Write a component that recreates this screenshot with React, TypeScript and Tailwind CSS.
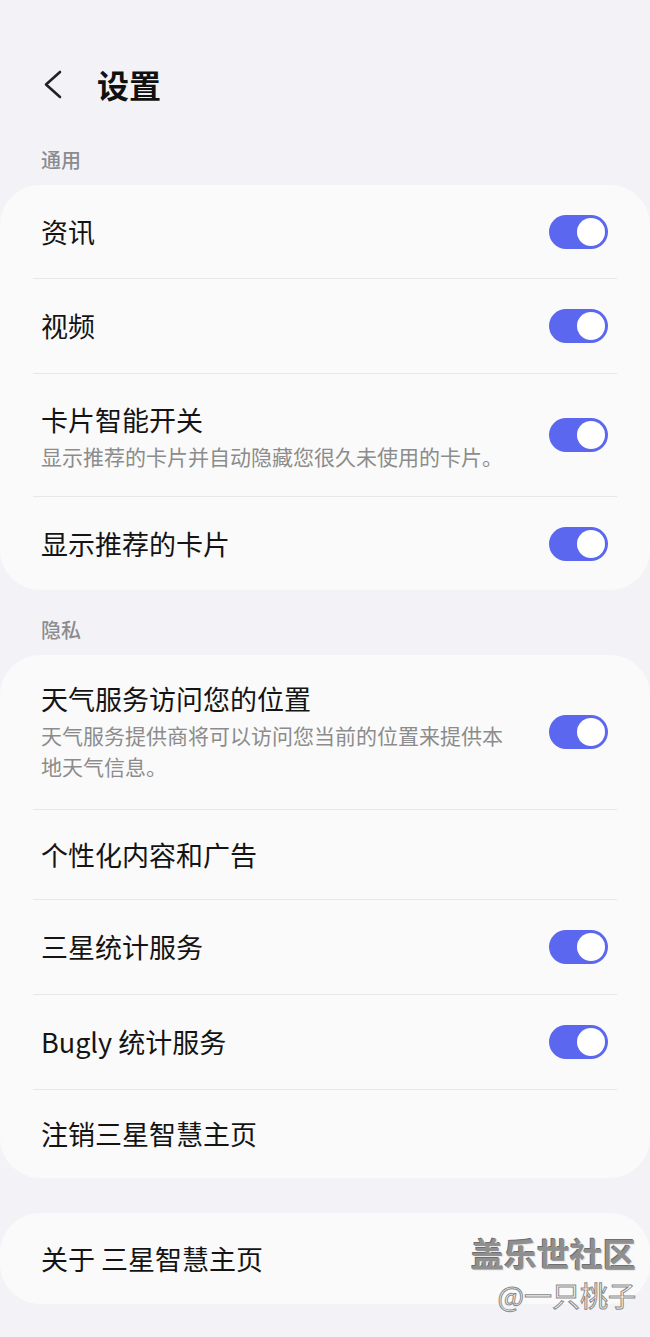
import React from 'react';

interface Row {
    title: string;
    sub?: string;
    toggle?: boolean;
    h: string;
    extra?: string;
}

const general: Row[] = [
    { title: '资讯', toggle: true, h: 'h-[93px]' },
    { title: '视频', toggle: true, h: 'h-[95px]' },
    { title: '卡片智能开关', sub: '显示推荐的卡片并自动隐藏您很久未使用的卡片。', toggle: true, h: 'h-[123px]', extra: 'pt-[4px]' },
    { title: '显示推荐的卡片', toggle: true, h: 'h-[94px]' },
];

const privacy: Row[] = [
    { title: '天气服务访问您的位置', sub: '天气服务提供商将可以访问您当前的位置来提供本地天气信息。', toggle: true, h: 'h-[154px]' },
    { title: '个性化内容和广告', h: 'h-[90px]' },
    { title: '三星统计服务', toggle: true, h: 'h-[95px]' },
    { title: 'Bugly 统计服务', toggle: true, h: 'h-[95px]' },
    { title: '注销三星智慧主页', h: 'h-[89px]' },
];

const Toggle: React.FC = () => (
    <div className="w-[59px] h-[34px] rounded-full bg-[#5b67ee] flex items-center justify-end pr-[3px] shrink-0">
        <div className="w-[28px] h-[28px] rounded-full bg-white" />
    </div>
);

const SettingRow: React.FC<{ row: Row; first: boolean }> = ({ row, first }) => (
    <div className={`${row.h} ${first ? '' : 'border-t border-[#e7e7e9]'} flex items-center justify-between`}>
        <div className={`flex flex-col pl-[8px] ${row.extra ?? ''}`}>
            <span className="text-[27px] leading-[34px] text-[#141414]">{row.title}</span>
            {row.sub && (
                <span className="mt-[4px] text-[21px] leading-[31px] text-[#8c8c8c] max-w-[472px]">{row.sub}</span>
            )}
        </div>
        {row.toggle && (
            <div className="pr-[9px] pl-[20px]">
                <Toggle />
            </div>
        )}
    </div>
);

const Card: React.FC<{ rows: Row[] }> = ({ rows }) => (
    <div className="bg-[#fafafa] rounded-[40px] px-[33px]">
        {rows.map((r, i) => (
            <SettingRow key={r.title} row={r} first={i === 0} />
        ))}
    </div>
);

const App: React.FC = () => {
    return (
        <div
            className="relative w-[650px] min-h-[1337px] bg-[#f3f3f7] overflow-hidden"
            style={{ fontFamily: '"Noto Sans CJK SC", "Noto Sans", sans-serif' }}
        >
            <header className="h-[136px] flex items-start pt-[62px]">
                <div className="h-[44px] flex items-center">
                    <svg className="ml-[41px]" width="22" height="30" viewBox="0 0 22 30" fill="none">
                        <polyline points="19,3 5,15.5 19,28" stroke="#222" strokeWidth="2.6" strokeLinecap="round" strokeLinejoin="round" />
                    </svg>
                    <h1 className="ml-[34px] text-[32px] font-bold text-[#111] leading-[44px]">设置</h1>
                </div>
            </header>

            <div className="h-[49px] flex items-center pl-[41px] pb-[2px]">
                <span className="text-[20px] font-medium text-[#8b8b90]">通用</span>
            </div>
            <Card rows={general} />

            <div className="h-[65px] flex items-center pl-[41px] pt-[15px]">
                <span className="text-[20px] font-medium text-[#8b8b90]">隐私</span>
            </div>
            <Card rows={privacy} />

            <div className="h-[35px]" />
            <div className="bg-[#fafafa] rounded-[40px] px-[33px]">
                <div className="h-[91px] flex items-center pl-[8px]">
                    <span className="text-[27px] leading-[34px] text-[#141414]">关于 三星智慧主页</span>
                </div>
            </div>

            <div className="absolute right-[14px] top-[1232px] flex flex-col items-end pointer-events-none">
                <span className="text-[33px] font-bold leading-[42px] text-[#8f8f8f] [text-shadow:1px_1px_0_#e8e8e8,-1px_-1px_0_#6f6f6f]">
                    盖乐世社区
                </span>
                <span className="mt-[4px] text-[28px] leading-[34px] text-[#fafafa] [-webkit-text-stroke:1px_#8a8a8a]">
                    @一只桃子
                </span>
            </div>
        </div>
    );
};

export default App;
